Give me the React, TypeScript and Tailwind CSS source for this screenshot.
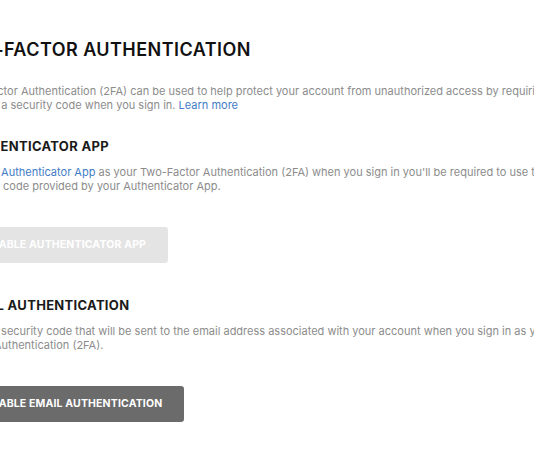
import React from 'react';

const font = { fontFamily: 'Inter, "Liberation Sans", sans-serif' };

const Section: React.FC<{ title: string; lines: React.ReactNode[]; button: string; enabled?: boolean }> = ({
  title,
  lines,
  button,
  enabled,
}) => (
  <div className="flex flex-col">
    <h2 className="text-[13px] leading-[16px] font-bold text-[#1a1a1a] tracking-[0.3px]">{title}</h2>
    <div className="mt-[11px] -ml-[4px] text-[11px] leading-[14px] text-[#8c8c8c]">
      {lines.map((l, i) => (
        <div key={i} className="whitespace-nowrap">
          {l}
        </div>
      ))}
    </div>
    <div className="mt-[34px]">
      <button
        className={`h-[36px] px-[22px] rounded-[3px] text-[10.5px] font-bold text-white tracking-[0.15px] ${
          enabled ? 'bg-[#6b6b6b]' : 'bg-[#e4e4e4]'
        }`}
      >
        {button}
      </button>
    </div>
  </div>
);

export default function App() {
  return (
    <div className="w-[534px] h-[462px] overflow-hidden bg-white" style={font}>
      <div className="-ml-[38px] pt-[38px] flex flex-col">
        {/* page is scrolled sideways, left edge is cut */}
        <h1 className="-ml-[12px] text-[18px] leading-[24px] font-semibold text-[#111] tracking-[0.45px]">
          TWO-FACTOR AUTHENTICATION
        </h1>
        <div className="mt-[22px] -ml-[4px] text-[11px] leading-[14px] text-[#8c8c8c]">
          <div className="whitespace-nowrap">
            Two-Factor Authentication (2FA) can be used to help protect your account from unauthorized access by
            requiring you
          </div>
          <div className="whitespace-nowrap">
            to enter a security code when you sign in.{' '}
            <a href="#" className="text-[#3f7cc6]">
              Learn more
            </a>
          </div>
        </div>
        <div className="mt-[26px] flex flex-col gap-[34px]">
          <Section
            title="AUTHENTICATOR APP"
            lines={[
              <>
                Use the{' '}
                <a href="#" className="text-[#3f7cc6]">
                  Authenticator App
                </a>{' '}
                as your Two-Factor Authentication (2FA) when you sign in you'll be required to use the
              </>,
              'security code provided by your Authenticator App.',
            ]}
            button="ENABLE AUTHENTICATOR APP"
          />
          <Section
            title="EMAIL AUTHENTICATION"
            lines={[
              'Use the security code that will be sent to the email address associated with your account when you sign in as your Two-',
              'Factor Authentication (2FA).',
            ]}
            button="ENABLE EMAIL AUTHENTICATION"
            enabled
          />
        </div>
      </div>
    </div>
  );
}
